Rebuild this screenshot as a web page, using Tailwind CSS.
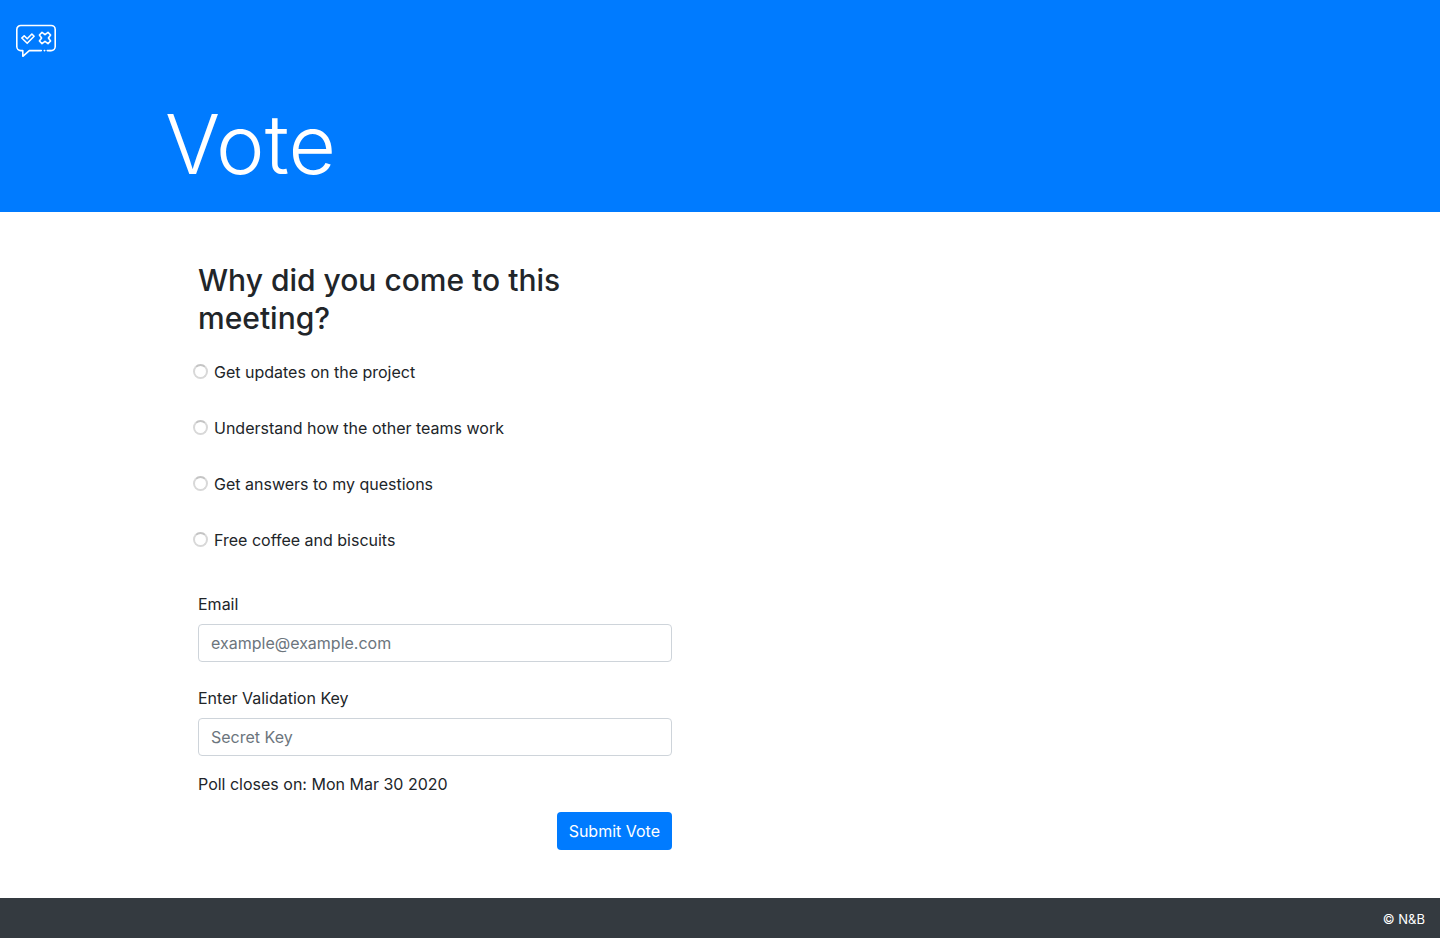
<!DOCTYPE html>
<html lang="en">
<head>
<meta charset="utf-8">
<meta name="viewport" content="width=device-width, initial-scale=1">
<title>Vote</title>
<script src="https://cdn.jsdelivr.net/npm/@tailwindcss/browser@4"></script>
</head>
<body class="bg-white font-['Inter',sans-serif] text-base text-[#212529]">
<header class="bg-[#007bff] text-white">
  <nav class="px-4 pt-6">
    <a href="#" aria-label="Home" class="inline-block align-top">
      <svg class="block h-[34px] w-10" viewBox="0 0 40 34" fill="none" stroke="currentColor" stroke-width="1.6" stroke-linejoin="round" stroke-linecap="round">
        <path d="M34 26.6h1.2a4 4 0 0 0 4-4V5.5a4 4 0 0 0-4-4H4.8a4 4 0 0 0-4 4v17.1a4 4 0 0 0 4 4h2v5.7l6.5-5.7h12"/>
        <path d="M31.3 26.6H34M28.3 26.6h.4"/>
        <path d="M5.8 14l2.4-2.2 3 3 4.7-4.8 2.2 2.2-6.9 7.1z"/>
        <path d="M26 8.4l3 2.3 3-2.3 2.6 2.6-2.2 3 2.2 3-2.6 2.6-3-2.2-3 2.2-2.6-2.6 2.2-3-2.2-3z"/>
      </svg>
    </a>
  </nav>
  <div class="mx-auto max-w-[1140px] px-[15px] pt-[34px] pb-3.5">
    <h1 class="text-[82px] leading-[106px] font-light">Vote</h1>
  </div>
</header>
<main class="mx-auto max-w-[1140px]">
  <form class="p-12 md:w-1/2">
    <fieldset>
      <legend class="pt-px pb-[23px] text-[30px] leading-[38px] font-medium">Why did you come to this meeting?</legend>
      <div class="-ml-[5px] flex flex-col gap-8">
        <label class="flex items-start gap-[6px]"><input type="radio" name="answer" class="mt-1 size-[15px] appearance-none rounded-full border-2 border-[#d8d8d8] border-t-[#c4c4c4] checked:border-4 checked:border-[#007bff]">Get updates on the project</label>
        <label class="flex items-start gap-[6px]"><input type="radio" name="answer" class="mt-1 size-[15px] appearance-none rounded-full border-2 border-[#d8d8d8] border-t-[#c4c4c4] checked:border-4 checked:border-[#007bff]">Understand how the other teams work</label>
        <label class="flex items-start gap-[6px]"><input type="radio" name="answer" class="mt-1 size-[15px] appearance-none rounded-full border-2 border-[#d8d8d8] border-t-[#c4c4c4] checked:border-4 checked:border-[#007bff]">Get answers to my questions</label>
        <label class="flex items-start gap-[6px]"><input type="radio" name="answer" class="mt-1 size-[15px] appearance-none rounded-full border-2 border-[#d8d8d8] border-t-[#c4c4c4] checked:border-4 checked:border-[#007bff]">Free coffee and biscuits</label>
      </div>
    </fieldset>
    <div class="mt-10">
      <label for="email" class="mb-2 block">Email</label>
      <input id="email" type="email" placeholder="example@example.com" class="block h-[38px] w-full rounded border border-[#ced4da] px-3 placeholder:text-[#6c757d]">
    </div>
    <div class="mt-6">
      <label for="key" class="mb-2 block">Enter Validation Key</label>
      <input id="key" type="text" placeholder="Secret Key" class="block h-[38px] w-full rounded border border-[#ced4da] px-3 placeholder:text-[#6c757d]">
    </div>
    <p class="mt-4">Poll closes on: Mon Mar 30 2020</p>
    <div class="mt-4 flex justify-end">
      <button type="submit" class="h-[38px] rounded bg-[#007bff] px-3 text-white">Submit Vote</button>
    </div>
  </form>
</main>
<footer class="bg-[#343a40] px-[15px] pt-[13px] pb-[11px] text-right text-[13px] leading-4 text-white">© N&amp;B</footer>
</body>
</html>
